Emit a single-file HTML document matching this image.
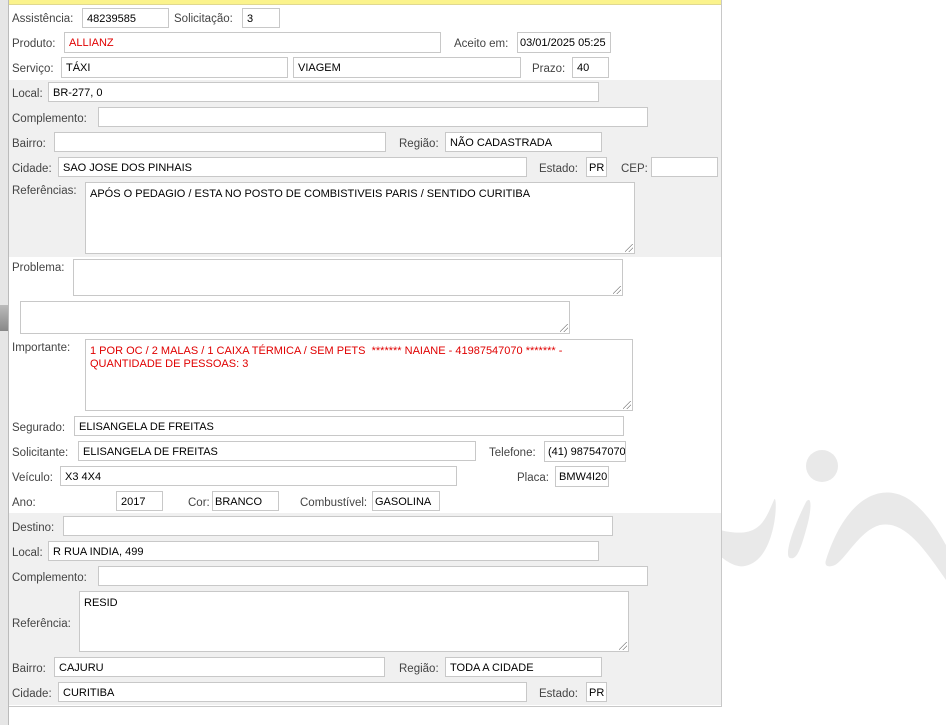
<!DOCTYPE html>
<html><head><meta charset="utf-8"><style>
body{margin:0;width:946px;height:725px;background:#fff;position:relative;overflow:hidden;font-family:"Liberation Sans",Tahoma,sans-serif;font-size:11.5px;color:#333}
.a{position:absolute}
.l{position:absolute;color:#444;white-space:nowrap;margin-top:2px}
.i{position:absolute;background:#fff;border:1px solid #c8c8c8;box-sizing:border-box;padding:4px 4px 2px;color:#000;white-space:nowrap;overflow:hidden;font-size:11px;line-height:13px}
.t{padding:5px 4px}
.r{color:#e00000}
.g{position:absolute;left:9px;width:712px;background:#f0f0f0}
.rz{position:absolute;right:1px;bottom:1px;width:8px;height:8px;background:linear-gradient(135deg,transparent 45%,#888 45%,#888 52%,transparent 52%,transparent 70%,#888 70%,#888 77%,transparent 77%)}
</style></head><body>
<svg class="a" style="left:720px;top:440px" width="226" height="160" viewBox="720 440 226 160">
<circle cx="822" cy="466" r="16" fill="#e9e9e9"/>
<path d="M720 530 C760 540 765 520 774 500 C778 490 778 560 745 566 C735 568 725 560 720 556Z" fill="#e9e9e9"/>
<path d="M806 502 C812 494 812 510 806 530 C800 552 796 560 790 558 C784 556 792 530 806 502Z" fill="#e9e9e9"/>
<path d="M826 560 C845 500 880 480 910 500 C930 515 940 535 946 545 L946 580 C925 550 905 520 880 525 C860 530 845 560 835 565 C828 568 824 566 826 560Z" fill="#e9e9e9"/>
</svg>
<div class="a" style="left:0;top:0;width:8px;height:725px;background:#e6e6e6;border-right:1px solid #bbb"></div>
<div class="a" style="left:0;top:305px;width:8px;height:26px;background:linear-gradient(#bbb,#888)"></div>
<div class="a" style="left:9px;top:0;width:712px;height:706px;background:#fff;border-right:1px solid #c8c8c8;border-bottom:1px solid #c8c8c8"></div>
<div class="a" style="left:9px;top:0;width:712px;height:4px;background:#fbf38c;border-bottom:1px solid #e0d890"></div>
<div class="g" style="top:80px;height:177px"></div>
<div class="g" style="top:513px;height:192px"></div>

<div class="l" style="left:12px;top:11px">Assistência:</div><div class="i" style="left:82px;top:8px;width:87px;height:20px">48239585</div>
<div class="l" style="left:174px;top:11px">Solicitação:</div><div class="i" style="left:242px;top:8px;width:38px;height:20px">3</div>

<div class="l" style="left:12px;top:36px">Produto:</div><div class="i r" style="left:64px;top:32px;width:377px;height:21px">ALLIANZ</div>
<div class="l" style="left:454px;top:36px">Aceito em:</div><div class="i" style="left:517px;top:32px;width:94px;height:21px;padding-left:2px">03/01/2025 05:25</div>

<div class="l" style="left:12px;top:61px">Serviço:</div><div class="i" style="left:61px;top:57px;width:227px;height:21px">TÁXI</div>
<div class="i" style="left:293px;top:57px;width:228px;height:21px">VIAGEM</div>
<div class="l" style="left:532px;top:61px">Prazo:</div><div class="i" style="left:572px;top:57px;width:37px;height:21px">40</div>

<div class="l" style="left:12px;top:86px">Local:</div><div class="i" style="left:48px;top:82px;width:551px;height:20px">BR-277, 0</div>
<div class="l" style="left:12px;top:111px">Complemento:</div><div class="i" style="left:98px;top:107px;width:550px;height:20px"></div>
<div class="l" style="left:12px;top:136px">Bairro:</div><div class="i" style="left:54px;top:132px;width:332px;height:20px"></div>
<div class="l" style="left:399px;top:136px">Região:</div><div class="i" style="left:445px;top:132px;width:157px;height:20px">NÃO CADASTRADA</div>
<div class="l" style="left:12px;top:161px">Cidade:</div><div class="i" style="left:58px;top:157px;width:469px;height:20px">SAO JOSE DOS PINHAIS</div>
<div class="l" style="left:539px;top:161px">Estado:</div><div class="i" style="left:586px;top:157px;width:21px;height:20px;padding-left:2px">PR</div>
<div class="l" style="left:621px;top:161px">CEP:</div><div class="i" style="left:651px;top:157px;width:67px;height:20px"></div>
<div class="l" style="left:12px;top:183px">Referências:</div><div class="i t" style="left:85px;top:182px;width:550px;height:72px">APÓS O PEDAGIO / ESTA NO POSTO DE COMBISTIVEIS PARIS / SENTIDO CURITIBA<div class="rz"></div></div>

<div class="l" style="left:12px;top:260px">Problema:</div><div class="i" style="left:73px;top:259px;width:550px;height:37px"><div class="rz"></div></div>
<div class="i" style="left:20px;top:301px;width:550px;height:33px"><div class="rz"></div></div>
<div class="l" style="left:12px;top:340px">Importante:</div><div class="i t r" style="left:85px;top:339px;width:548px;height:72px;white-space:normal">1 POR OC / 2 MALAS / 1 CAIXA TÉRMICA / SEM PETS &nbsp;******* NAIANE - 41987547070 ******* - QUANTIDADE DE PESSOAS: 3<div class="rz"></div></div>

<div class="l" style="left:12px;top:420px">Segurado:</div><div class="i" style="left:74px;top:416px;width:550px;height:20px">ELISANGELA DE FREITAS</div>
<div class="l" style="left:12px;top:445px">Solicitante:</div><div class="i" style="left:78px;top:441px;width:398px;height:20px">ELISANGELA DE FREITAS</div>
<div class="l" style="left:489px;top:445px">Telefone:</div><div class="i" style="left:544px;top:441px;width:82px;height:21px;padding-left:3px">(41) 987547070</div>
<div class="l" style="left:12px;top:470px">Veículo:</div><div class="i" style="left:60px;top:466px;width:397px;height:20px">X3 4X4</div>
<div class="l" style="left:517px;top:470px">Placa:</div><div class="i" style="left:555px;top:466px;width:54px;height:21px;padding-left:3px">BMW4I20</div>
<div class="l" style="left:12px;top:495px">Ano:</div><div class="i" style="left:116px;top:491px;width:47px;height:20px">2017</div>
<div class="l" style="left:188px;top:495px">Cor:</div><div class="i" style="left:212px;top:491px;width:67px;height:20px;padding-left:2px">BRANCO</div>
<div class="l" style="left:300px;top:495px">Combustível:</div><div class="i" style="left:372px;top:491px;width:68px;height:20px;padding-left:2px">GASOLINA</div>

<div class="l" style="left:12px;top:520px">Destino:</div><div class="i" style="left:63px;top:516px;width:550px;height:20px"></div>
<div class="l" style="left:12px;top:545px">Local:</div><div class="i" style="left:48px;top:541px;width:551px;height:20px">R RUA INDIA, 499</div>
<div class="l" style="left:12px;top:570px">Complemento:</div><div class="i" style="left:98px;top:566px;width:550px;height:20px"></div>
<div class="l" style="left:12px;top:616px">Referência:</div><div class="i t" style="left:79px;top:591px;width:550px;height:61px">RESID<div class="rz"></div></div>
<div class="l" style="left:12px;top:661px">Bairro:</div><div class="i" style="left:54px;top:657px;width:331px;height:20px">CAJURU</div>
<div class="l" style="left:399px;top:661px">Região:</div><div class="i" style="left:445px;top:657px;width:157px;height:20px">TODA A CIDADE</div>
<div class="l" style="left:12px;top:686px">Cidade:</div><div class="i" style="left:58px;top:682px;width:469px;height:20px">CURITIBA</div>
<div class="l" style="left:539px;top:686px">Estado:</div><div class="i" style="left:586px;top:682px;width:21px;height:20px;padding-left:2px">PR</div>
</body></html>
